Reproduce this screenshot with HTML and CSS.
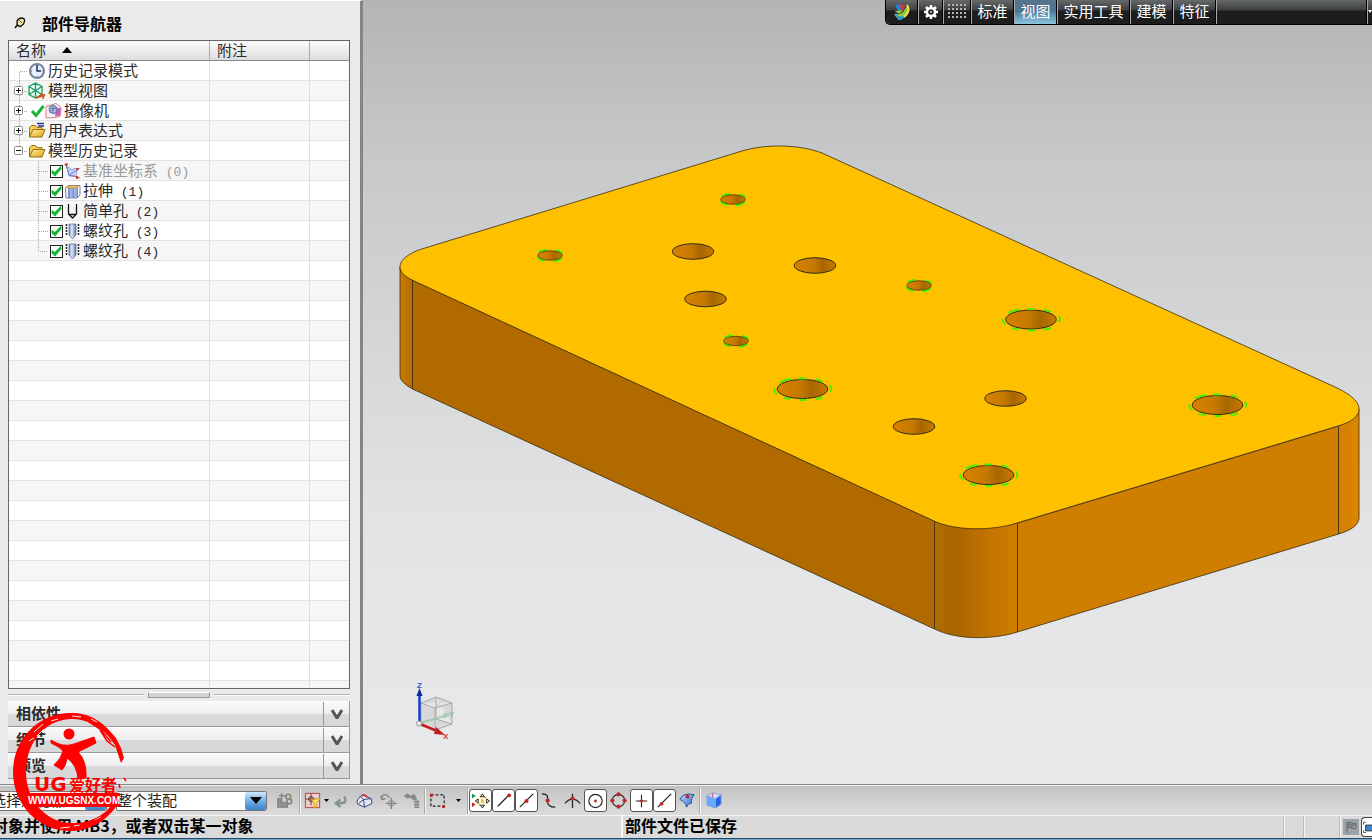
FILE: index.html
```html
<!DOCTYPE html>
<html lang="zh-CN">
<head>
<meta charset="utf-8">
<meta name="viewport" content="width=device-width, initial-scale=1">
<title>部件导航器</title>
<link rel="stylesheet" href="styles.css">
</head>
<body>
<svg class="sprites" aria-hidden="true">
  <defs>
    <linearGradient id="folder" x1="0" y1="0" x2="1" y2="1"><stop offset="0" stop-color="#fff3a0"/><stop offset="1" stop-color="#e3a011"/></linearGradient>
    <linearGradient id="steel"><stop offset="0" stop-color="#6f86b4"/><stop offset=".4" stop-color="#e3ebf8"/><stop offset="1" stop-color="#5d76a8"/></linearGradient>
    <linearGradient id="sky" x1="0" y1="0" x2="1" y2="1"><stop offset="0" stop-color="#b9dcff"/><stop offset="1" stop-color="#2468df"/></linearGradient>
    <linearGradient id="hole"><stop offset="0" stop-color="#d98100"/><stop offset=".45" stop-color="#c67900"/><stop offset=".68" stop-color="#a76700"/><stop offset="1" stop-color="#c87900"/></linearGradient>
    <linearGradient id="corner"><stop offset="0" stop-color="#b26d00"/><stop offset=".25" stop-color="#a86500"/><stop offset=".65" stop-color="#c27400"/><stop offset="1" stop-color="#d07e00"/></linearGradient>
    <linearGradient id="corner-left"><stop offset="0" stop-color="#ca7b00"/><stop offset="1" stop-color="#b46d00"/></linearGradient>
    <linearGradient id="corner-right"><stop offset="0" stop-color="#d27f00"/><stop offset="1" stop-color="#dd8600"/></linearGradient>
  </defs>
  <symbol id="i-plus" viewBox="0 0 18 20"><path d="M9.500 0v20M14 10.500h4" stroke="#a6a6a6" stroke-dasharray="1 1" fill="none"/><rect x="4.500" y="5.500" width="8" height="8" rx="1" fill="#fff" stroke="#8c8c8c"/><path d="M6 9.500h5M8.500 7v5" stroke="#111"/></symbol>
  <symbol id="i-minus" viewBox="0 0 18 20"><path d="M9.500 0v6M14 10.500h4" stroke="#a6a6a6" stroke-dasharray="1 1" fill="none"/><rect x="4.500" y="5.500" width="8" height="8" rx="1" fill="#fff" stroke="#8c8c8c"/><path d="M6 9.500h5" stroke="#111"/></symbol>
  <symbol id="i-first" viewBox="0 0 18 20"><path d="M9.500 20V10.500H18" stroke="#a6a6a6" stroke-dasharray="1 1" fill="none"/></symbol>
  <symbol id="i-branch" viewBox="0 0 40 20"><path d="M28.500 0v20M29 10.500h9" stroke="#a6a6a6" stroke-dasharray="1 1" fill="none"/></symbol>
  <symbol id="i-last" viewBox="0 0 40 20"><path d="M28.500 0v10.500h9" stroke="#a6a6a6" stroke-dasharray="1 1" fill="none"/></symbol>
  <symbol id="i-clock" viewBox="0 0 18 18"><circle cx="9" cy="9" r="7" fill="#e4eefc" stroke="#75839b" stroke-width="2"/><path d="M9 3v6h4" stroke="#1c2d50" stroke-width="1.500" fill="none"/><path d="M9 14v1M3 9h1M14.500 9h1" stroke="#53627a"/></symbol>
  <symbol id="i-view" viewBox="0 0 18 18"><path d="M7.500 1 14 4.500v8L7.500 16 1 12.500v-8zM1 4.500l6.500 4L14 4.500M7.500 8.500V16M7.500 1v7.500M1 12.500l6.500-4 6.500 4" stroke="#14a35f" stroke-width="1.300" fill="#e6faef"/><path d="m8 16 8-2.500m-4-1 4.500.500-2 4" stroke="#db5020" stroke-width="1.500" fill="none"/></symbol>
  <symbol id="i-tick" viewBox="0 0 15 14"><path d="m2 7 4 4.500L13.500 2" stroke="#1cb235" stroke-width="3" fill="none"/></symbol>
  <symbol id="i-camera" viewBox="0 0 17 17"><path d="m1 4 10-3 5 4-1 9-5 1-9 .500z" fill="#f6f0f8" stroke="#d57a85"/><path d="m11 5 5 1-1 7-5 1z" fill="#c45ac2"/><circle cx="8" cy="7" r="4" fill="#a9bbda" stroke="#62719a"/><path d="M5 6h6M8 3v8M5 9l6-4" stroke="#62719a" stroke-width=".700"/></symbol>
  <symbol id="i-folder" viewBox="0 0 18 18"><path d="M1.500 15V5.500l2-2h4l1.500 2h5V8" fill="#f5cf4e" stroke="#96711f"/><path d="m1.500 15 3.500-7.500h12L14 15z" fill="url(#folder)" stroke="#9b6b14"/></symbol>
  <symbol id="i-expr" viewBox="0 0 18 18"><use href="#i-folder"/><path d="M9 1.500h7M10 4h6" stroke="#27338d" stroke-width="1.300"/></symbol>
  <symbol id="i-csys" viewBox="0 0 17 17"><path d="m3 4 3 1 1 2 5-2 1 5-3 3-5 0z" fill="#c7d4f5" stroke="#8ba0d8"/><path d="m2 2 3 10 8-5M5 12l8 2" stroke="#6282c8" fill="none"/><path d="m0 1 4-1-1 4zM12 5l4 0-3 3zM12 12l4 3-4 1z" fill="#c53538"/></symbol>
  <symbol id="i-extrude" viewBox="0 0 17 17"><path d="M1.500 5 4 2.500h12V12l-3 3H2z" fill="#f3f5fd" stroke="#6f82bd"/><path d="M5 4v11M9 4v11M13 4v11" stroke="#4c64a4" stroke-width="1.300"/><path d="M6 5h2.500v10H6zM10 5h2.500v10H10z" fill="#9db2e6"/><path d="M2 4.500 5 3h10l-3 2z" fill="#f0d487" stroke="#d09c26" stroke-width=".800"/></symbol>
  <symbol id="i-hole" viewBox="0 0 17 17"><path d="M4.500 1v10l4 4 4-4V1M5 11.500h7" stroke="#111" fill="none" stroke-width="1.300"/></symbol>
  <symbol id="i-thread" viewBox="0 0 17 17"><path d="M5 1h7v11l-3.500 4L5 12z" fill="url(#steel)" stroke="#526ba0" stroke-width=".700"/><path d="M2.500 1v12M14.500 1v12" stroke="#222" stroke-width="1.500" stroke-dasharray="2 1"/></symbol>
  <g id="hole-s"><path d="M-11.500-3.500q4-2 8.500-2M6-5q5 .500 6.500 3M-12.500 1.500q2 3.500 7 3.800M3 5.500q6 0 8.500-3" stroke="#45f000" stroke-width="2" fill="none"/><ellipse rx="12.300" ry="4.700" fill="url(#hole)" stroke="#4a3d10" stroke-width=".800"/></g>
  <g id="hole-m"><ellipse rx="20.700" ry="7.800" fill="url(#hole)" stroke="#332b16"/></g>
  <g id="hole-l"><ellipse rx="25.300" ry="9.500" fill="url(#hole)" stroke="#332b16"/><path d="M-23-6.500q5-3 12-3.500M-4-10.500h7M13-9.800q4 .400 7 2.500M27.500-3.500q3 3 0 6.500M-28.500-1q0 4 3.500 6M-19 8.500q3 1.500 7 1.500M-3 11h7M13 10q5 0 7-2" stroke="#45f000" stroke-width="1.800" fill="none"/></g>
</svg>

<main class="workspace">
  <aside class="navigator">
    <header class="nav-title">
      <svg width="12" height="12" viewBox="0 0 12 12"><path d="m1 11 3-4" stroke="#111" stroke-width="1.500"/><path d="M3 5q0-3 4-4 4 0 3.500 3Q10 8 6 9.500 3 9 3 5z" fill="#f2e9a4" stroke="#111" stroke-width="1.400"/><path d="m5 3 3 3" stroke="#665f31"/></svg>
      <h1>部件导航器</h1>
    </header>
    <div class="tree-panel">
      <table class="tree">
        <colgroup><col class="col-name"><col class="col-note"><col></colgroup>
        <thead><tr><th><span class="cell">名称<svg width="10" height="6" viewBox="0 0 10 6"><path d="M0 6 5 0l5 6z"/></svg></span></th><th>附注</th><th></th></tr></thead>
        <tbody>
          <tr><td><div class="row"><svg class="guide"><use href="#i-first"/></svg><svg class="icon"><use href="#i-clock"/></svg><span>历史记录模式</span></div></td><td></td><td></td></tr>
          <tr><td><div class="row"><button class="toggle" aria-label="展开模型视图"><svg class="guide"><use href="#i-plus"/></svg></button><svg class="icon"><use href="#i-view"/></svg><span>模型视图</span></div></td><td></td><td></td></tr>
          <tr><td><div class="row"><button class="toggle" aria-label="展开摄像机"><svg class="guide"><use href="#i-plus"/></svg></button><svg class="icon-tick"><use href="#i-tick"/></svg><svg class="icon"><use href="#i-camera"/></svg><span>摄像机</span></div></td><td></td><td></td></tr>
          <tr><td><div class="row"><button class="toggle" aria-label="展开用户表达式"><svg class="guide"><use href="#i-plus"/></svg></button><svg class="icon"><use href="#i-expr"/></svg><span>用户表达式</span></div></td><td></td><td></td></tr>
          <tr><td><div class="row"><button class="toggle" aria-label="折叠模型历史记录"><svg class="guide"><use href="#i-minus"/></svg></button><svg class="icon"><use href="#i-folder"/></svg><span>模型历史记录</span></div></td><td></td><td></td></tr>
          <tr><td><div class="row muted"><svg class="guide deep"><use href="#i-branch"/></svg><input type="checkbox" id="f0" checked><svg class="icon-small"><use href="#i-csys"/></svg><label for="f0">基准坐标系<span class="count"> (0)</span></label></div></td><td></td><td></td></tr>
          <tr><td><div class="row"><svg class="guide deep"><use href="#i-branch"/></svg><input type="checkbox" id="f1" checked><svg class="icon-small"><use href="#i-extrude"/></svg><label for="f1">拉伸<span class="count"> (1)</span></label></div></td><td></td><td></td></tr>
          <tr><td><div class="row"><svg class="guide deep"><use href="#i-branch"/></svg><input type="checkbox" id="f2" checked><svg class="icon-small"><use href="#i-hole"/></svg><label for="f2">简单孔<span class="count"> (2)</span></label></div></td><td></td><td></td></tr>
          <tr><td><div class="row"><svg class="guide deep"><use href="#i-branch"/></svg><input type="checkbox" id="f3" checked><svg class="icon-small"><use href="#i-thread"/></svg><label for="f3">螺纹孔<span class="count"> (3)</span></label></div></td><td></td><td></td></tr>
          <tr><td><div class="row"><svg class="guide deep"><use href="#i-last"/></svg><input type="checkbox" id="f4" checked><svg class="icon-small"><use href="#i-thread"/></svg><label for="f4">螺纹孔<span class="count"> (4)</span></label></div></td><td></td><td></td></tr>
        </tbody>
      </table>
    </div>
    <div class="splitter"><i class="rule"></i><i class="grip"></i><i class="rule"></i></div>
    <div class="sections">
      <button class="section"><span>相依性</span><svg class="chevron" viewBox="0 0 12 10"><path d="m1 1 5 8 5-8" /></svg></button>
      <button class="section"><span>细节</span><svg class="chevron" viewBox="0 0 12 10"><path d="m1 1 5 8 5-8" /></svg></button>
      <button class="section"><span>预览</span><svg class="chevron" viewBox="0 0 12 10"><path d="m1 1 5 8 5-8" /></svg></button>
    </div>
  </aside>

  <section class="viewport">
    <svg class="scene" viewBox="363 0 1009 784" role="img" aria-label="板件模型">
      <g stroke="#3a2c12" stroke-width=".8" stroke-linejoin="round">
        <path d="M400 267v109q0 6 12.500 13V280q-12.500-6-12.500-13z" fill="url(#corner-left)"/>
        <path d="M412.500 280v109l522 240V521z" fill="#b06a00"/>
        <path d="M934.500 521v108c22 11 58 11 83 3V523z" fill="url(#corner)"/>
        <path d="M1017.500 523v109l321-98V426z" fill="#d07e00"/>
        <path d="M1338.500 426v108c14-4 20.500-10 20.500-16V409z" fill="url(#corner-right)"/>
        <path d="M425 248 742 151C765 144 798 144 822 153L1335 387C1352 395 1359 402 1359 409 1359 416 1352 422 1338 426L1017 523C992 531 956 531 934 521L412 280C404 276 400 272 400 267 400 260 408 253 425 248z" fill="#ffc000"/>
      </g>
      <use href="#hole-s" x="550" y="255.500"/><use href="#hole-s" x="733" y="199.500"/><use href="#hole-s" x="919" y="285.500"/><use href="#hole-s" x="736" y="341"/>
      <use href="#hole-m" x="693" y="251.500"/><use href="#hole-m" x="815" y="265.500"/><use href="#hole-m" x="705.500" y="299"/><use href="#hole-m" x="1005.500" y="398.500"/><use href="#hole-m" x="914" y="426.500"/>
      <use href="#hole-l" x="1031" y="319.500"/><use href="#hole-l" x="802.500" y="389"/><use href="#hole-l" x="988.500" y="475"/><use href="#hole-l" x="1217.500" y="405"/>
      <g class="triad">
        <path d="m421 703 15-6 16 6v21l-17 6-14-7zM421 703l14 5 17-5M435 708v22M436 697v22l16 5M436 719l-15 4" fill="#cfd0d2" fill-opacity=".65" stroke="#a9a9ab"/>
        <path d="m420 723 24-7" stroke="#a9c9b0" stroke-width="2"/><path d="m443 713 8 1-7 5z" fill="#a9c9b0"/>
        <path d="M419.500 722v-29" stroke="#173fbc" stroke-width="2.500"/><path d="m416.500 696 3-8 3 8z" fill="#0b2a9d"/>
        <path d="m420 724 17 7" stroke="#c11f22" stroke-width="2.500"/><path d="m436 727 9 8-11-1z" fill="#c11f22"/>
        <circle cx="419" cy="723.500" r="2.500" fill="#eee" stroke="#999"/>
        <text x="417" y="688" fill="#3156c5">Z</text><text x="443" y="739" fill="#d0393c">X</text><text x="449" y="717" fill="#92b89b">Y</text>
      </g>
    </svg>
    <nav class="ribbon">
      <button class="logo" aria-label="菜单"><svg width="18" height="18" viewBox="0 0 18 18"><path d="M2 2 8 1l2 5-5 2z" fill="#2f7bd4"/><path d="m7 1 5 2-2 5-2-2z" fill="#e63126"/><path d="M2 8q5 5 8 1t5-7q3 6-2 11t-9 2l-3-4q7 1 9-4" fill="#93ca42"/><path d="M2 8q5 10 12 2-3 8-9 7z" fill="#2794dd"/><path d="M14 2q4 6-3 12" stroke="#f5e248" stroke-width="2" fill="none"/></svg></button>
      <button class="gear" aria-label="设置"><svg width="16" height="16" viewBox="-8 -8 16 16"><circle r="4" fill="none" stroke="#fff" stroke-width="2.500"/><path d="M0-7v3M0 7V4M-7 0h3M7 0H4M-5-5l2 2M5 5 3 3M-5 5l2-2M5-5 3-3" stroke="#fff" stroke-width="2.500"/><circle r="1" fill="#ddd"/></svg></button>
      <button class="dots" aria-label="网格"><i></i></button>
      <button>标准</button><button class="active">视图</button><button class="wide">实用工具</button><button>建模</button><button>特征</button>
      <span class="filler"></span><button class="more" aria-label="更多"><svg width="4" height="4" viewBox="0 0 4 4"><path d="M0 1h4L2 4z" fill="#fff"/></svg></button>
    </nav>
  </section>
</main>

<div class="toolbar">
  <div class="combo filter"><select aria-label="选择过滤器"><option>没有选择过滤器</option></select><span class="drop"><svg viewBox="0 0 12 7"><path d="M0 0h12L6 7z"/></svg></span></div>
  <div class="combo scope"><select aria-label="选择范围"><option>整个装配</option></select><span class="drop"><svg viewBox="0 0 12 7"><path d="M0 0h12L6 7z"/></svg></span></div>
  <button class="tool roomy" aria-label="装配约束"><svg viewBox="0 0 20 20"><path d="M3 8h4v4h6v5H3zM7 2v8M4 5h7" fill="#8d9292" stroke="#828787" stroke-width="1.500"/><circle cx="14" cy="6" r="2.500" fill="none" stroke="#8f8b79" stroke-width="2"/><circle cx="15" cy="11" r="2.500" fill="none" stroke="#8f8b79" stroke-width="2"/></svg></button>
  <i class="sep"></i>
  <button class="tool" aria-label="过滤"><svg viewBox="0 0 20 20"><path d="M2.500 2.500h15v15h-15z" fill="#eccdca" stroke="#b43a40"/><path d="M8.500 3v12M3 8.500h11" stroke="#8c3032"/><circle cx="8.500" cy="8.500" r="2.500" fill="none" stroke="#333"/><path d="m9 9 9-1-4 5v4l-2 1v-5z" fill="#ffe35c" stroke="#d29b1c"/></svg></button><svg class="caret" viewBox="0 0 5 3"><path d="M0 0h5L2.500 3z"/></svg>
  <button class="tool roomy" aria-label="返回"><svg viewBox="0 0 20 20"><path d="M14 6q4 7-5 7H6m4-4-5 4 5 4" stroke="#839591" stroke-width="2.500" fill="none"/></svg></button>
  <button class="tool roomy" aria-label="实体"><svg viewBox="0 0 20 20"><path d="M2 11q3-7 8-6l7 3 1 5-8 4-7-3z" fill="#dfe7f5" stroke="#34456b"/><path d="m9 9 8-1M9 9l1 8M5 5l4 4-5 4" stroke="#34456b" fill="none"/><path d="M7 4q5 0 6 3" stroke="#d72c31" stroke-width="1.500" fill="none"/></svg></button>
  <button class="tool roomy" aria-label="移动点"><svg viewBox="0 0 20 20"><path d="M3 8q0-5 5-4l3 3M2 5l1 4 4-1M13 7v12M7 13h12" stroke="#80878a" stroke-width="1.500" fill="none"/><circle cx="13" cy="13" r="3" fill="none" stroke="#858b8c"/></svg></button>
  <button class="tool roomy" aria-label="约束链"><svg viewBox="0 0 20 20"><path d="M1 5q4-4 7 0l4-2 3 6-4 1-3-3-4 1zM12 10h5v8h-5z" fill="#858a88"/><path d="M12 13h5M12 16h5" stroke="#bbb"/></svg></button>
  <i class="sep"></i>
  <button class="tool" aria-label="矩形选择"><svg viewBox="0 0 20 20"><path d="M3 4h14v12H3z" fill="none" stroke="#222" stroke-width="1.300" stroke-dasharray="3 2"/><path d="M2 3h3v3H2zM15 15h3v3h-3z" fill="#c62323"/></svg></button><svg class="caret spaced" viewBox="0 0 5 3"><path d="M0 0h5L2.500 3z"/></svg>
  <i class="sep"></i>
  <div class="snaps">
    <button class="tool on" aria-label="启用捕捉点"><svg viewBox="0 0 20 20"><path d="m1 3 4 2-4 3z" fill="#129333"/><path d="m1 12 4 2-4 3z" fill="#be292b"/><circle cx="12" cy="10.500" r="5" fill="none" stroke="#e3bd2a" stroke-width="2" stroke-dasharray="3 2"/><path d="M12 3l2 3h-4zM12 18l2-3h-4zM4.500 10.500l3-2v4zM19.500 10.500l-3-2v4z" fill="#fff" stroke="#222"/><circle cx="12" cy="10.500" r="2" fill="#e9c43b"/></svg></button>
    <button class="tool on" aria-label="端点"><svg viewBox="0 0 20 20"><path d="M4 16 15 5" stroke="#222" stroke-width="1.300"/><circle cx="16" cy="4.500" r="2" fill="#c22628"/></svg></button>
    <button class="tool on" aria-label="中点"><svg viewBox="0 0 20 20"><path d="M3 17 17 3" stroke="#222" stroke-width="1.300"/><circle cx="10" cy="10.500" r="2.200" fill="#c22628"/></svg></button>
    <button class="tool" aria-label="控制点"><svg viewBox="0 0 20 20"><path d="M2 3q6 0 6 4v4q0 6 8 6" fill="none" stroke="#222" stroke-width="1.300"/><circle cx="8" cy="10" r="2.200" fill="#c22628"/></svg></button>
    <button class="tool" aria-label="交点"><svg viewBox="0 0 20 20"><path d="M2 13q8-9 16 0M10 3v15" fill="none" stroke="#222" stroke-width="1.300"/><circle cx="10" cy="8" r="2.200" fill="#c22628"/></svg></button>
    <button class="tool on" aria-label="圆心"><svg viewBox="0 0 20 20"><circle cx="10" cy="10.500" r="7" fill="none" stroke="#222" stroke-width="1.200"/><circle cx="10" cy="10.500" r="1.500" fill="#c22628"/></svg></button>
    <button class="tool" aria-label="象限点"><svg viewBox="0 0 20 20"><circle cx="10" cy="10" r="6.500" fill="none" stroke="#222" stroke-width="1.200"/><g fill="#c22628"><circle cx="10" cy="3.500" r="2.200"/><circle cx="10" cy="16.500" r="2.200"/><circle cx="3.500" cy="10" r="2.200"/><circle cx="16.500" cy="10" r="2.200"/></g></svg></button>
    <button class="tool on" aria-label="现有点"><svg viewBox="0 0 20 20"><path d="M10 4v13M4 10.500h12" stroke="#222" stroke-width="1.200"/><path d="M8 10.500h4M10 8.500v4" stroke="#c22628" stroke-width="1.500"/></svg></button>
    <button class="tool on" aria-label="曲线上的点"><svg viewBox="0 0 20 20"><path d="M3 17 17 3" stroke="#222" stroke-width="1.300"/><circle cx="7" cy="13.500" r="2" fill="#c22628"/></svg></button>
    <button class="tool" aria-label="面上的点"><svg viewBox="0 0 20 20"><path d="M2 9Q5 1 17 4q-4 4-3 9-4 0-5 4-1-6-7-8z" fill="url(#sky)" stroke="#294e94"/><circle cx="10" cy="6" r="2" fill="#c22628"/></svg></button>
  </div>
  <i class="sep"></i>
  <button class="tool cube" aria-label="着色"><svg viewBox="0 0 20 20"><path d="M2 5v10l9 3V8z" fill="#64a9ff"/><path d="M11 8v10l6-4V4z" fill="#2863dd"/><path d="m2 5 6-3 9 2-6 4z" fill="#c8e0fb"/><path d="m2 5 9 3 6-4M11 8v10M2 5v10l9 3 6-4V4L8 2z" stroke="#8ba6e0" fill="none"/><path d="M8 2v5" stroke="#d95064"/></svg></button>
</div>

<footer class="status">
  <p class="prompt">对象并使用 MB3，或者双击某一对象</p>
  <p class="message">部件文件已保存</p>
  <span class="slot"></span><span class="slot gap"></span>
  <span class="slot tray"><svg class="flag" viewBox="0 0 16 16"><path d="M4 14V3m0 1q3-2 5 0t4 0v5q-2 2-4 0T4 9M6 3v6M9 4v6M4 6h9" stroke="#65686a" fill="none"/></svg><button class="screen" aria-label="全屏"><svg viewBox="0 0 14 16"><path d="M2 5V2h3M2 12v3h3" stroke="#333" fill="none"/><path d="M4.500 5.500H14V13H4.500z" fill="#3b83d2" stroke="#222"/></svg></button></span>
</footer>
<div class="taskbar"></div>

<svg class="stamp" viewBox="0 0 120 124" role="img" aria-label="UG爱好者">
  <path fill="#f00" d="M112 46 109 36 104 26 96 17C87 7 73 0 58 1 27 1 1 27 1 60c0 33 26 59 57 59 20 0 37-10 47-26l-4-1c-9 12-25 20-41 19-26 0-46-23-46-51C14 31 33 7 60 7c14 0 27 7 36 17l7 9 3 9 3 9z"/>
  <path stroke="#ebebeb" stroke-width="1" fill="none" d="m22 20 9-8M25 24l7-7M39 9l7-2M17 29l5-3M48 116l10-1M62 114l6-1M83 108l6-3M60 4l9 1M79 7l6 3"/>
  <path stroke="#f00" stroke-width="1.500" fill="none" d="m77 10 12 8 10 12M88 18l7 11 8 6M78 112l13-7 8-10M66 115l12-5M112 66l2 3M107 72l1 4"/>
  <circle cx="57" cy="22" r="5.500" fill="#f00"/>
  <path fill="#f00" stroke="#f00" stroke-width="1" d="M39 28q12 8 23 4l20-7 2 6-18 9q9 9 8 26l-8 1q-1-14-11-21-1 8-5 12l-8-5q7-6 9-14-3-4-12-8z"/>
  <text class="brand latin" x="22" y="79">UG</text><text class="brand" x="57" y="79">爱好者</text>
  <path fill="#f00" d="M14 81h94v14H14z"/><text class="url" x="16" y="92">WWW.UGSNX.COM</text>
</svg>
</body>
</html>
```

FILE: styles.css
```css
* { box-sizing: border-box; }

body {
  display: flex;
  flex-direction: column;
  height: 100vh;
  margin: 0;
  position: relative;
  overflow: hidden;
  background: #d8d8d8;
  color: #2a2a2a;
  font: 15px/20px "Noto Sans CJK SC", sans-serif;
}

button { border: 0; padding: 0; background: none; color: inherit; font: inherit; }
svg { display: block; flex: none; }
p, h1 { margin: 0; }
.sprites { position: absolute; width: 0; height: 0; }

.workspace { display: flex; flex: 1; min-height: 0; border-bottom: 1px solid #858585; }

/* Part navigator */
.navigator {
  display: flex;
  flex: none;
  flex-direction: column;
  width: 363px;
  padding: 0 10px 5px 8px;
  border-top: 1px solid #fff;
  border-right: 3px solid #858585;
  background: #eaeaea;
}
.nav-title { display: flex; align-items: center; gap: 16px; height: 39px; padding: 4px 6px 0; }
.nav-title h1 { color: #000; font-size: 16px; line-height: 20px; }

.tree-panel {
  flex: 1;
  min-height: 0;
  overflow: hidden;
  border: 1px solid #666;
  background:
    linear-gradient(#dedede, #dedede) 200px 0 / 1px 100% no-repeat,
    linear-gradient(#dedede, #dedede) 300px 0 / 1px 100% no-repeat,
    repeating-linear-gradient(#f6f6f6 0 19px, #e2e2e2 19px 20px, #fff 20px 39px, #e2e2e2 39px 40px);
}
.tree { width: 100%; border-spacing: 0; table-layout: fixed; }
.tree td, .tree th { height: 20px; padding: 0; }
.tree th {
  padding-left: 7px;
  border-bottom: 1px solid #8a8a8a;
  border-right: 1px solid #aaa;
  background: linear-gradient(#fafafa 0 10%, #ededed 50%, #dadcde);
  font-weight: 400;
  line-height: 18px;
  text-align: left;
  vertical-align: top;
}
.tree th:last-child { border-right: 0; }
.col-name { width: 201px; }
.col-note { width: 100px; }
.cell { display: flex; align-items: center; gap: 16px; }
.row { display: flex; align-items: center; height: 20px; padding-left: 1px; white-space: nowrap; }
.row > span, .row > label { padding: 0 0 2px 2px; }
.row .count { font-family: "Liberation Mono", monospace; font-size: 13px; line-height: 1; white-space: pre; }
.muted { color: #999; }
.guide { width: 18px; height: 20px; }
.deep { width: 40px; }
.icon { width: 18px; height: 18px; }
.icon-small { width: 17px; height: 17px; margin-left: 1px; }
.icon-tick { width: 15px; height: 14px; margin-left: 2px; }
.icon-tick + .icon { width: 17px; }
.row input {
  flex: none;
  width: 13px;
  height: 13px;
  margin: 0;
  border: 1px solid #222;
  appearance: none;
  background: #fff;
}
.row input:checked::before {
  content: "";
  display: block;
  height: 11px;
  background: #16b433;
  clip-path: polygon(6% 38%, 35% 60%, 90% 2%, 98% 28%, 38% 100%, 6% 72%);
}

.splitter { display: flex; align-items: center; gap: 4px; height: 12px; }
.rule { flex: 1; height: 2px; border-top: 1px solid #b0b0b0; background: #fff; }
.grip { width: 62px; height: 6px; border: 1px solid #999; border-top-color: #fff; background: #d2d2d2; }
.sections { border-right: 1px solid #999; }
.section {
  display: flex;
  align-items: stretch;
  width: 100%;
  height: 26px;
  border-top: 1px solid #fff;
  border-bottom: 1px solid #999;
  background: linear-gradient(#f9f9f9, #eee 50%, #d8dadb 51%, #d5d7d8);
  font-weight: 700;
  line-height: 21px;
  text-align: left;
}
.section span { flex: 1; padding-left: 8px; border-right: 1px solid #999; }
.chevron { align-self: center; width: 12px; height: 10px; margin: 0 6px 0 7px; fill: none; stroke: #555; stroke-width: 3; }

/* Model canvas */
.viewport { position: relative; flex: 1; min-width: 0; background: linear-gradient(#b3b4b6, #c7c8ca 20%, #e3e4e5 68%, #e8e9eb); }
.scene { width: 100%; height: 100%; }
.triad { font: 700 8px "Liberation Sans", sans-serif; }
.ribbon {
  position: absolute;
  top: 0;
  right: 0;
  display: flex;
  gap: 1px;
  height: 25px;
  padding-left: 2px;
  border-bottom: 1px solid #000;
  border-left: 1px solid #000;
  border-bottom-left-radius: 5px;
  background: #a8a8a8;
  overflow: hidden;
}
.ribbon button, .filler {
  display: grid;
  place-items: center;
  width: 42px;
  height: 24px;
  padding-bottom: 2px;
  border-right: 1px solid #000;
  background: linear-gradient(#666869, #3c3f41 10px, #1d1d1d 11px);
  color: #fff;
  line-height: 22px;
}
.ribbon .logo { width: 32px; margin-left: -2px; padding-bottom: 0; }
.ribbon .gear { width: 24px; padding-bottom: 0; }
.ribbon .dots { width: 27px; }
.dots i { width: 20px; height: 16px; background: radial-gradient(circle, #b4b4b4 1px, transparent 1px) 0 0 / 4px 4px; }
.ribbon .active { background: linear-gradient(#54748c, #52738c 10px, #4a7897 11px, #8cc5df); }
.ribbon .wide { width: 72px; }
.filler { width: 150px; }
.ribbon .more { width: 4px; border: 0; }

/* Selection bar */
.toolbar {
  display: flex;
  flex: none;
  align-items: center;
  height: 31px;
  border-top: 1px solid #eee;
  border-bottom: 1px solid #f4f4f4;
  background: linear-gradient(#c2c2c2, #dcdcdc);
}
.combo { display: flex; height: 20px; border: 1px solid #777; border-radius: 2px; background: #fff; }
.combo select {
  flex: 1;
  min-width: 0;
  padding: 0 0 2px;
  border: 0;
  appearance: none;
  background: none;
  color: #222;
  font: inherit;
  line-height: 16px;
}
.filter { width: 147px; margin-left: -40px; }
.scope { width: 151px; margin: 0 6px 0 9px; }
.drop { display: grid; place-items: center; width: 21px; border-radius: 2px; background: linear-gradient(#cfe8fb, #73b0e6 50%, #3b82ca); }
.drop svg { width: 12px; height: 7px; }
.tool { display: grid; place-items: center; flex: none; width: 23px; height: 23px; }
.tool svg { width: 19px; height: 19px; }
.scope + .tool { width: 22px; margin-right: 4px; }
.on { border: 1px solid #555; border-radius: 3px; background: #fff; }
.snaps { display: flex; }
.sep { width: 2px; height: 26px; border-left: 1px solid #a8a8a8; background: #f8f8f8; }
.caret { width: 5px; height: 3px; }
.roomy + .roomy { margin-left: 1px; }
.spaced { margin: 0 6px 0 7px; }
.cube { margin-left: 2px; }

/* Status line */
.status { display: flex; flex: none; height: 22px; background: #dadada; color: #000; font-weight: 700; }
.status p { font-size: 16px; line-height: 18px; white-space: nowrap; }
.status .prompt { width: 621px; padding-right: 8px; text-indent: -8px; }
.status .message { flex: 1; padding-left: 2px; border-left: 2px solid #f6f6f6; }
.slot { width: 20px; border-left: 1px solid #f6f6f6; box-shadow: -1px 0 #bbb; }
.gap { width: 36px; }
.tray { display: flex; align-items: center; gap: 2px; width: 32px; padding-left: 2px; }
.flag { width: 16px; height: 16px; background: #9ca3a6; }
.screen { height: 20px; border: 1px solid #444; border-right: 0; border-radius: 4px 0 0 4px; background: #fff; }
.screen svg { width: 11px; height: 16px; }
.taskbar { flex: none; height: 2px; border-top: 1px solid #1f4966; background: #79a5c4; }

/* Round brand mark over the lower left corner */
.stamp { position: absolute; bottom: 4px; left: 12px; width: 120px; height: 124px; pointer-events: none; }
.brand { fill: #f00; font: 700 16px "Noto Sans CJK SC", sans-serif; }
.latin { font: 700 20px "DejaVu Sans", sans-serif; }
.url { fill: #fff; font: 700 10px "Liberation Sans", sans-serif; }
```
